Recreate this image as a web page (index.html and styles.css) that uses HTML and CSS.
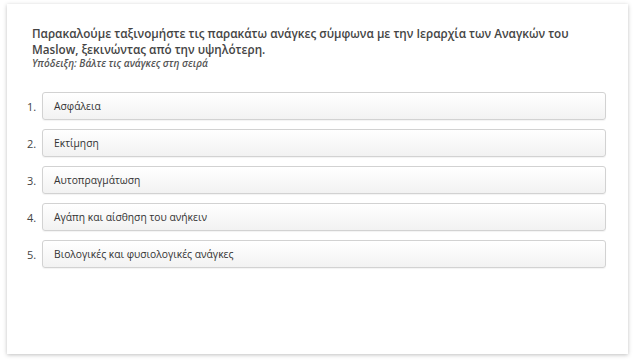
FILE: index.html
```html
<!DOCTYPE html>
<html>
<head>
    <title>Ιεραρχία Αναγκών</title>
    <link rel="stylesheet" href="styles.css">
</head>
<body>
    <div class="card">
        <div class="question">
            <p class="prompt">Παρακαλούμε ταξινομήστε τις παρακάτω ανάγκες σύμφωνα με την Ιεραρχία των Αναγκών του Maslow, ξεκινώντας από την υψηλότερη.</p>
            <p class="hint">Υπόδειξη: Βάλτε τις ανάγκες στη σειρά</p>
        </div>
        <ol class="sort-list">
            <li><span class="num">1.</span><div class="item">Ασφάλεια</div></li>
            <li><span class="num">2.</span><div class="item">Εκτίμηση</div></li>
            <li><span class="num">3.</span><div class="item">Αυτοπραγμάτωση</div></li>
            <li><span class="num">4.</span><div class="item">Αγάπη και αίσθηση του ανήκειν</div></li>
            <li><span class="num">5.</span><div class="item">Βιολογικές και φυσιολογικές ανάγκες</div></li>
        </ol>
    </div>
</body>
</html>
```

FILE: styles.css
```css
body {
    margin: 0;
    padding: 4px 8px 10px 7px;
    background: #fff;
    font-family: "Open Sans", "Noto Sans", sans-serif;
    color: #333;
}
.card {
    height: 350px;
    box-sizing: border-box;
    padding: 21px 22px 0 20px;
    background: #fff;
    box-shadow: 0 1px 4px rgba(0, 0, 0, 0.25);
}
.question {
    margin: 0 0 22px 5px;
}
.prompt {
    margin: 0;
    font-size: 11.7px;
    font-weight: 600;
    line-height: 16px;
    color: #444;
}
.hint {
    margin: 0;
    font-size: 10px;
    font-style: italic;
    font-weight: 600;
    line-height: 13px;
    color: #555;
}
.sort-list {
    list-style: none;
    margin: 0;
    padding: 0;
    display: flex;
    flex-direction: column;
    gap: 9px;
}
.sort-list li {
    display: flex;
    align-items: center;
}
.num {
    width: 15px;
    font-size: 11px;
    color: #444;
}
.item {
    flex: 1;
    height: 28px;
    box-sizing: border-box;
    padding: 0 11px;
    display: flex;
    align-items: center;
    font-size: 10.3px;
    color: #333;
    background: linear-gradient(#fff, #f2f2f2);
    border: 1px solid #d2d2d2;
    border-radius: 3px;
    box-shadow: 0 1px 1px rgba(0, 0, 0, 0.05);
}
```
